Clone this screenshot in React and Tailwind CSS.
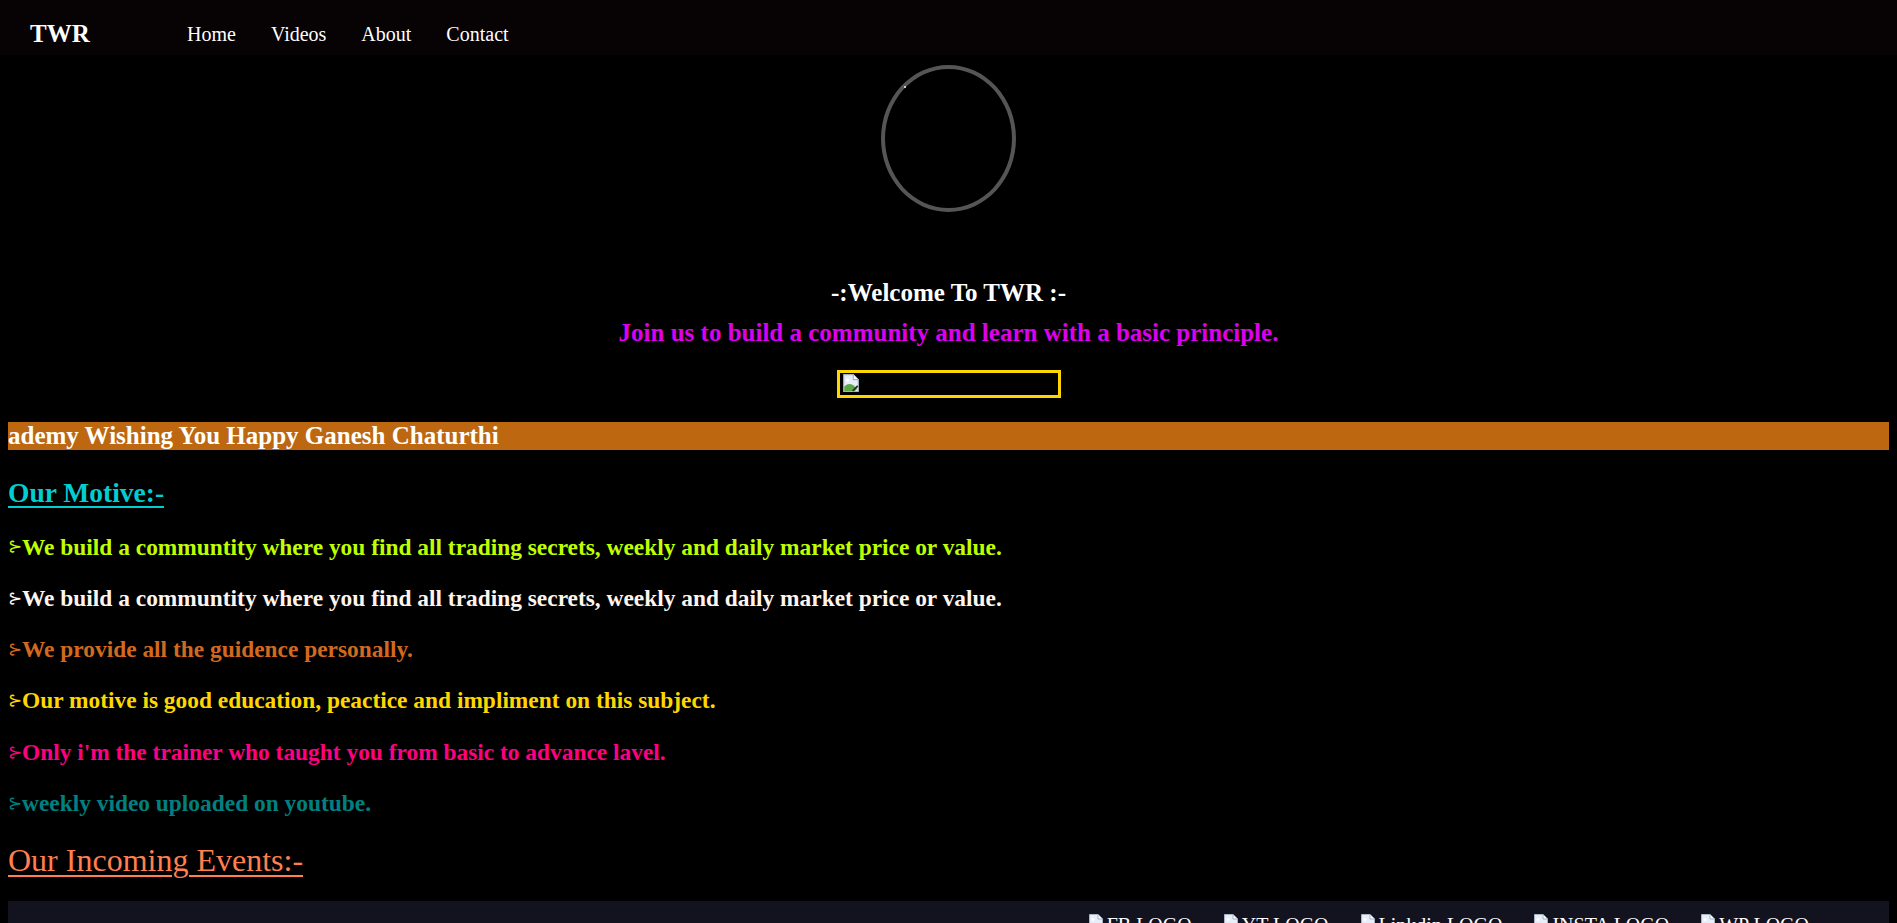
import React from 'react';

function BrokenImg({ className = '' }) {
  return (
    <svg viewBox="0 0 16 16" className={className}>
      <path d="M1.5 0.5 H10 L14.5 5 V15.5 H1.5 Z" fill="#e8eef7" stroke="#a8b4c4" />
      <path d="M10 0.5 V5 H14.5" fill="#fff" stroke="#a8b4c4" />
      <path d="M2 15 V11 Q6 7.5 10 10 L13.5 13 L11.5 15 Z" fill="#5ca849" />
      <path d="M9.5 15 L14 10.5" stroke="#2b2b2b" strokeWidth="1.6" />
      <circle cx="5" cy="5.5" r="1.4" fill="#fff" />
    </svg>
  );
}

const motives = [
  { text: 'We build a communtity where you find all trading secrets, weekly and daily market price or value.', color: 'text-[#bfff00]' },
  { text: 'We build a communtity where you find all trading secrets, weekly and daily market price or value.', color: 'text-[#fff5ee]' },
  { text: 'We provide all the guidence personally.', color: 'text-[#d2691e]' },
  { text: 'Our motive is good education, peactice and impliment on this subject.', color: 'text-[#ffd700]' },
  { text: "Only i'm the trainer who taught you from basic to advance lavel.", color: 'text-[#ff0080]' },
  { text: 'weekly video uploaded on youtube.', color: 'text-[#008080]' }
];

const socials = ['FB LOGO', 'YT LOGO', 'Linkdin LOGO', 'INSTA LOGO', 'WP LOGO'];

export default function App() {
  return (
    <div className="min-h-screen bg-black text-white font-['Liberation_Serif',serif] overflow-hidden">
      <nav className="h-[55px] bg-[#070203] flex items-start pt-[20px]">
        <div className="ml-[30px] w-[157px] text-[25px] font-bold leading-[28px]">TWR</div>
        <ul className="flex gap-[35px] text-[20px] leading-[28px]">
          <li>Home</li>
          <li>Videos</li>
          <li>About</li>
          <li>Contact</li>
        </ul>
      </nav>

      <div className="mt-[10px] flex justify-center">
        <div className="relative w-[135px] h-[147px] rounded-[50%] border-[4px] border-[#555555]">
          <span className="absolute left-[19px] top-[17px] w-[2px] h-[2px] bg-[#cccccc]" />
        </div>
      </div>

      <h2 className="mt-[66px] text-center text-[25px] font-bold leading-[29px]">-:Welcome To TWR :-</h2>
      <h3 className="mt-[11px] text-center text-[25px] font-bold leading-[29px] text-[#dd00ee]">
        Join us to build a community and learn with a basic principle.
      </h3>

      <div className="mt-[23px] flex justify-center">
        <div className="w-[224px] h-[28px] border-[3px] border-[#ffd700] pl-[2px] pt-[1px]">
          <BrokenImg className="w-[18px] h-[18px]" />
        </div>
      </div>

      <div className="mx-[8px] mt-[24px] h-[28px] bg-[#bd6711] overflow-hidden whitespace-nowrap">
        <span className="text-[25px] font-bold leading-[28px]">ademy Wishing You Happy Ganesh Chaturthi</span>
      </div>

      <div className="mx-[8px]">
        <h2 className="mt-[26px] h-[34px] leading-[34px] text-[27.5px] font-bold text-[#00ced1]">
          <span className="underline underline-offset-[4px] decoration-[2px]">Our Motive:-</span>
        </h2>

        <div className="mt-[11.5px]">
          {motives.map((m, i) => (
            <p key={i} className={`h-[51.3px] flex items-center text-[23.4px] font-bold ${m.color}`}>
              <span className="font-normal text-[17px]">⊱</span>
              {m.text}
            </p>
          ))}
        </div>

        <h2 className="mt-[14px] h-[34px] leading-[34px] text-[32px] text-[#ff7f50]">
          <span className="underline underline-offset-[4px] decoration-[2px]">Our Incoming Events:-</span>
        </h2>

        <footer className="mt-[24px] h-[70px] bg-[#13121f] flex justify-end gap-[31px] pr-[80px] pt-[12px]">
          {socials.map((s) => (
            <div key={s} className="flex items-start text-[20px] leading-[24px]">
              <BrokenImg className="w-[16px] h-[16px] mt-[1px] mr-[3px]" />
              <span>{s}</span>
            </div>
          ))}
        </footer>
      </div>
    </div>
  );
}
